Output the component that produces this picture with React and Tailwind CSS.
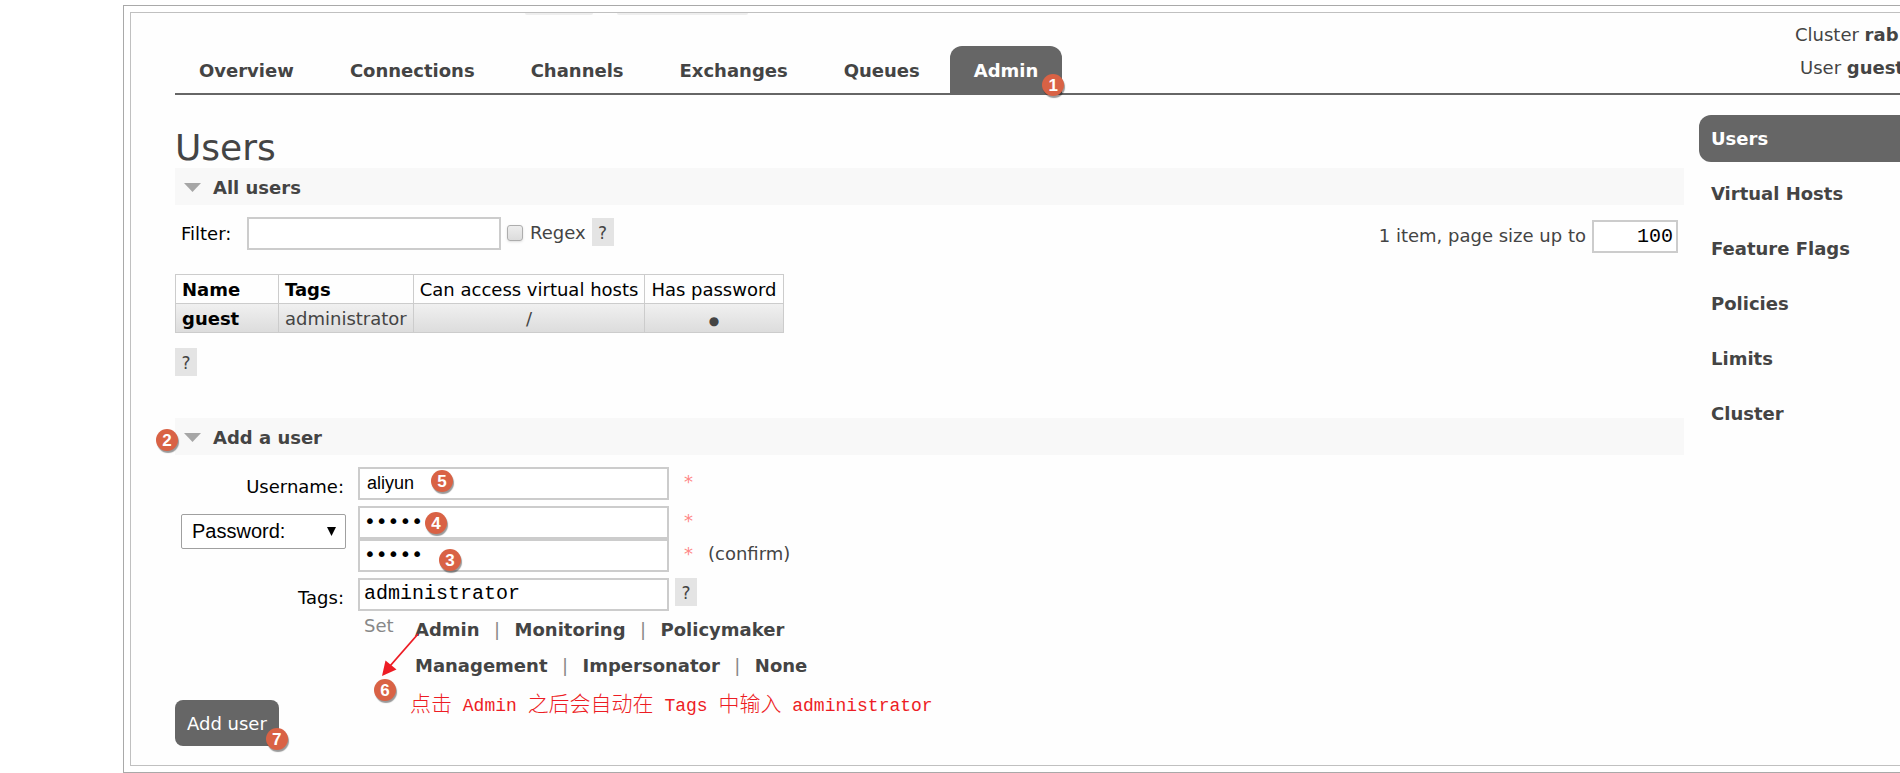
import React from "react";

const TABS = ["Overview", "Connections", "Channels", "Exchanges", "Queues"];
const SIDE_LINKS = ["Virtual Hosts", "Feature Flags", "Policies", "Limits", "Cluster"];

const FIELD = "h-[33px] border-2 border-[#ccc] bg-white text-black outline-none";
const CELL = "border border-[#ccc] px-1.5 pt-0.5 pb-0";

function Badge({ n, className }) {
  return (
    <span
      className={
        "pointer-events-none absolute z-10 flex size-[22px] items-center justify-center rounded-full bg-[#d96245] font-['Liberation_Sans',sans-serif] text-[17px] leading-none font-bold text-white shadow-[1px_2px_1px_rgba(0,0,0,0.4)] " +
        className
      }
    >
      {n}
    </span>
  );
}

function Help({ label, className = "" }) {
  return (
    <button
      type="button"
      aria-label={label}
      className={"h-7 w-[22px] shrink-0 bg-[#e4e4e4] pt-0.5 text-center text-[17px] leading-[26px] text-[#444] " + className}
    >
      ?
    </button>
  );
}

function SectionTitle({ children, badge }) {
  return (
    <h2 className="relative flex h-[37px] items-center bg-[#f8f8f8] pt-0.5 pl-[9px] font-bold">
      <svg width="17" height="9" viewBox="0 0 17 9" className="mr-3 shrink-0" aria-hidden="true">
        <path d="M0 0H17L8.5 9Z" fill="#a6a6a6" />
      </svg>
      {children}
      {badge}
    </h2>
  );
}

function TagLinks({ items }) {
  return (
    <div className="flex h-9 items-center">
      {items.map((item, i) => (
        <React.Fragment key={item}>
          {i > 0 && <span className="w-[35px] text-center text-[#888]">|</span>}
          <a href="#tag" className="font-bold">{item}</a>
        </React.Fragment>
      ))}
    </div>
  );
}

const Star = () => <span className="ml-[15px] pb-1 leading-6 text-[#ff8888]">*</span>;

const Cjk = ({ children }) => (
  <span className="font-['Noto_Sans_CJK_SC',sans-serif] text-[21px] font-light">{children}</span>
);

export default function App() {
  return (
    <div className="min-h-screen overflow-hidden bg-white pt-[5px] pl-[123px] font-['DejaVu_Sans',Verdana,sans-serif] text-lg leading-7 text-[#444]">
      <div className="border border-r-0 border-[#a9a9a9] py-1.5 pl-1.5">
        <div className="border border-r-0 border-[#c0c0c0] bg-[#fefefe] pb-[19px] pl-11">
          <div className="flex h-0.5 gap-6 pl-[350px]" aria-hidden="true">
            <div className="w-[68px] rounded-b-sm bg-[#eee]" />
            <div className="w-[131px] rounded-b-sm bg-[#eee]" />
          </div>

          <header className="flex items-end justify-between border-b-2 border-[#666]">
            <nav className="flex gap-2 pt-[31px] font-bold">
              {TABS.map((tab) => (
                <a key={tab} href="#tab" className="flex h-[47px] items-center px-6 pt-0.5">{tab}</a>
              ))}
              <a href="#admin" className="relative -ml-0.5 flex h-[47px] items-center rounded-t-xl bg-[#666] px-6 pt-0.5 text-white">
                Admin
                <Badge n={1} className="-right-0.5 -bottom-[3px]" />
              </a>
            </nav>
            <ul className="w-[105px] shrink-0 self-start overflow-hidden pt-[3px] leading-[33px] whitespace-nowrap">
              <li>Cluster <b>rab</b></li>
              <li className="pl-[5px]">User <b>guest</b></li>
            </ul>
          </header>

          <div className="flex items-start gap-[15px]">
            <main className="min-w-0 flex-1 pt-[33px]">
              <h1 className="text-4xl leading-10">Users</h1>

              <SectionTitle>All users</SectionTitle>
              <div className="flex items-start justify-between pt-3 pl-1.5">
                <div className="flex items-center">
                  <label htmlFor="filter" className="w-[66px] text-black">Filter:</label>
                  <input id="filter" type="text" className={FIELD + " w-[254px] px-1.5"} />
                  <input
                    id="regex"
                    type="checkbox"
                    className="mr-[7px] mb-0.5 ml-1.5 size-4 appearance-none rounded-[3px] border border-[#adadad] bg-linear-to-b from-[#ededed] to-[#dcdcdc] shadow-sm"
                  />
                  <label htmlFor="regex" className="pb-0.5">Regex</label>
                  <Help label="Filter help" className="-mt-1 ml-1.5" />
                </div>
                <div className="flex items-center gap-1.5 pt-[3px] pr-1.5">
                  <label htmlFor="pagesize" className="pb-0.5">1 item, page size up to</label>
                  <input
                    id="pagesize"
                    type="text"
                    defaultValue="100"
                    className={FIELD + " w-[86px] px-[3px] text-right font-['Liberation_Mono',monospace] text-xl"}
                  />
                </div>
              </div>

              <table className="mt-[21px] border-collapse text-black">
                <thead>
                  <tr className="h-[29px] text-left leading-6">
                    <th className={CELL + " w-[103px]"}>Name</th>
                    <th className={CELL}>Tags</th>
                    <th className={CELL + " font-normal"}>Can access virtual hosts</th>
                    <th className={CELL + " font-normal"}>Has password</th>
                  </tr>
                </thead>
                <tbody>
                  <tr className="h-[29px] bg-linear-to-b from-[#f0f0f0] to-[#dcdcdc] leading-6">
                    <td className={CELL + " font-bold"}>
                      <a href="#guest">guest</a>
                    </td>
                    <td className={CELL + " text-[#444]"}>administrator</td>
                    <td className={CELL + " text-center text-[#444]"}>/</td>
                    <td className={CELL + " text-center text-[#444]"}>
                      <span className="text-xs">●</span>
                    </td>
                  </tr>
                </tbody>
              </table>
              <Help label="Users help" className="mt-[15px] mb-[42px] block" />

              <SectionTitle badge={<Badge n={2} className="top-[11px] -left-[19px]" />}>Add a user</SectionTitle>
              <form className="pt-3" onSubmit={(e) => e.preventDefault()}>
                <div className="grid grid-cols-[171px_1fr] gap-x-3 gap-y-1.5">
                  <label htmlFor="username" className="pt-1.5 pr-0.5 text-right leading-[27px] text-black">Username:</label>
                  <div className="relative flex items-center">
                    <input
                      id="username"
                      type="text"
                      defaultValue="aliyun"
                      className={FIELD + " w-[311px] px-[7px] font-['Liberation_Sans',sans-serif]"}
                    />
                    <Star />
                    <Badge n={5} className="top-[3px] left-[73px]" />
                  </div>

                  <div className="relative mt-2 ml-1.5 h-[35px]">
                    <select
                      aria-label="Password type"
                      className="h-full w-full appearance-none rounded-[2px] border border-[#a0a0a0] bg-white pb-0.5 pl-2.5 font-['Liberation_Sans',sans-serif] text-xl text-black"
                    >
                      <option>Password:</option>
                    </select>
                    <svg width="9" height="9" viewBox="0 0 9 9" className="pointer-events-none absolute top-[13px] right-2.5" aria-hidden="true">
                      <path d="M0 0H9L4.5 9Z" fill="#000" />
                    </svg>
                  </div>
                  <div>
                    <div className="relative flex items-center">
                      <input aria-label="Password" type="password" defaultValue="aliyu" className={FIELD + " w-[311px] px-1 pb-1 text-xl"} />
                      <Star />
                      <Badge n={4} className="top-1.5 left-[67px]" />
                    </div>
                    <div className="relative flex items-center">
                      <input aria-label="Confirm password" type="password" defaultValue="aliyu" className={FIELD + " w-[311px] px-1 pb-1 text-xl"} />
                      <Star />
                      <span className="ml-[15px] pb-1 leading-6">(confirm)</span>
                      <Badge n={3} className="top-2.5 left-[81px]" />
                    </div>
                  </div>

                  <label htmlFor="tags" className="pt-1.5 pr-0.5 text-right leading-[27px] text-black">Tags:</label>
                  <div className="flex h-[33px] items-start">
                    <input
                      id="tags"
                      type="text"
                      defaultValue="administrator"
                      className={FIELD + " w-[311px] px-1 pb-0.5 font-['Liberation_Mono',monospace] text-xl"}
                    />
                    <Help label="Tags help" className="ml-1.5" />
                  </div>
                </div>

                <div className="relative flex pt-px pl-[189px]">
                  <span className="w-[51px] text-[#888]">Set</span>
                  <div>
                    <TagLinks items={["Admin", "Monitoring", "Policymaker"]} />
                    <TagLinks items={["Management", "Impersonator", "None"]} />
                  </div>
                  <svg width="40" height="46" viewBox="0 0 40 46" className="pointer-events-none absolute top-5 left-[205px]" aria-hidden="true">
                    <path d="M38 3L10 35" stroke="#ed1c24" strokeWidth="1.8" />
                    <path d="M2 45L5.5 29.5L16.5 38.5Z" fill="#ed1c24" />
                  </svg>
                  <Badge n={6} className="top-[68px] left-[199px]" />
                  <p className="absolute top-[75px] left-[235px] font-['Liberation_Mono',monospace] leading-8 whitespace-nowrap text-[#ed1c24]">
                    <Cjk>点击</Cjk> Admin <Cjk>之后会自动在</Cjk> Tags <Cjk>中输入</Cjk> administrator
                  </p>
                </div>

                <button type="submit" className="relative mt-4 block h-[46px] rounded-lg bg-[#666] px-3 pt-0.5 text-white">
                  Add user
                  <Badge n={7} className="-right-[9px] -bottom-1" />
                </button>
              </form>
            </main>

            <aside className="w-[201px] shrink-0 pt-5">
              <nav className="flex flex-col gap-2 font-bold">
                <a href="#users" className="flex h-[47px] items-center rounded-l-xl bg-[#666] pl-3 text-white">Users</a>
                {SIDE_LINKS.map((link) => (
                  <a key={link} href="#side" className="flex h-[47px] items-center pl-3">{link}</a>
                ))}
              </nav>
            </aside>
          </div>
        </div>
      </div>
    </div>
  );
}
